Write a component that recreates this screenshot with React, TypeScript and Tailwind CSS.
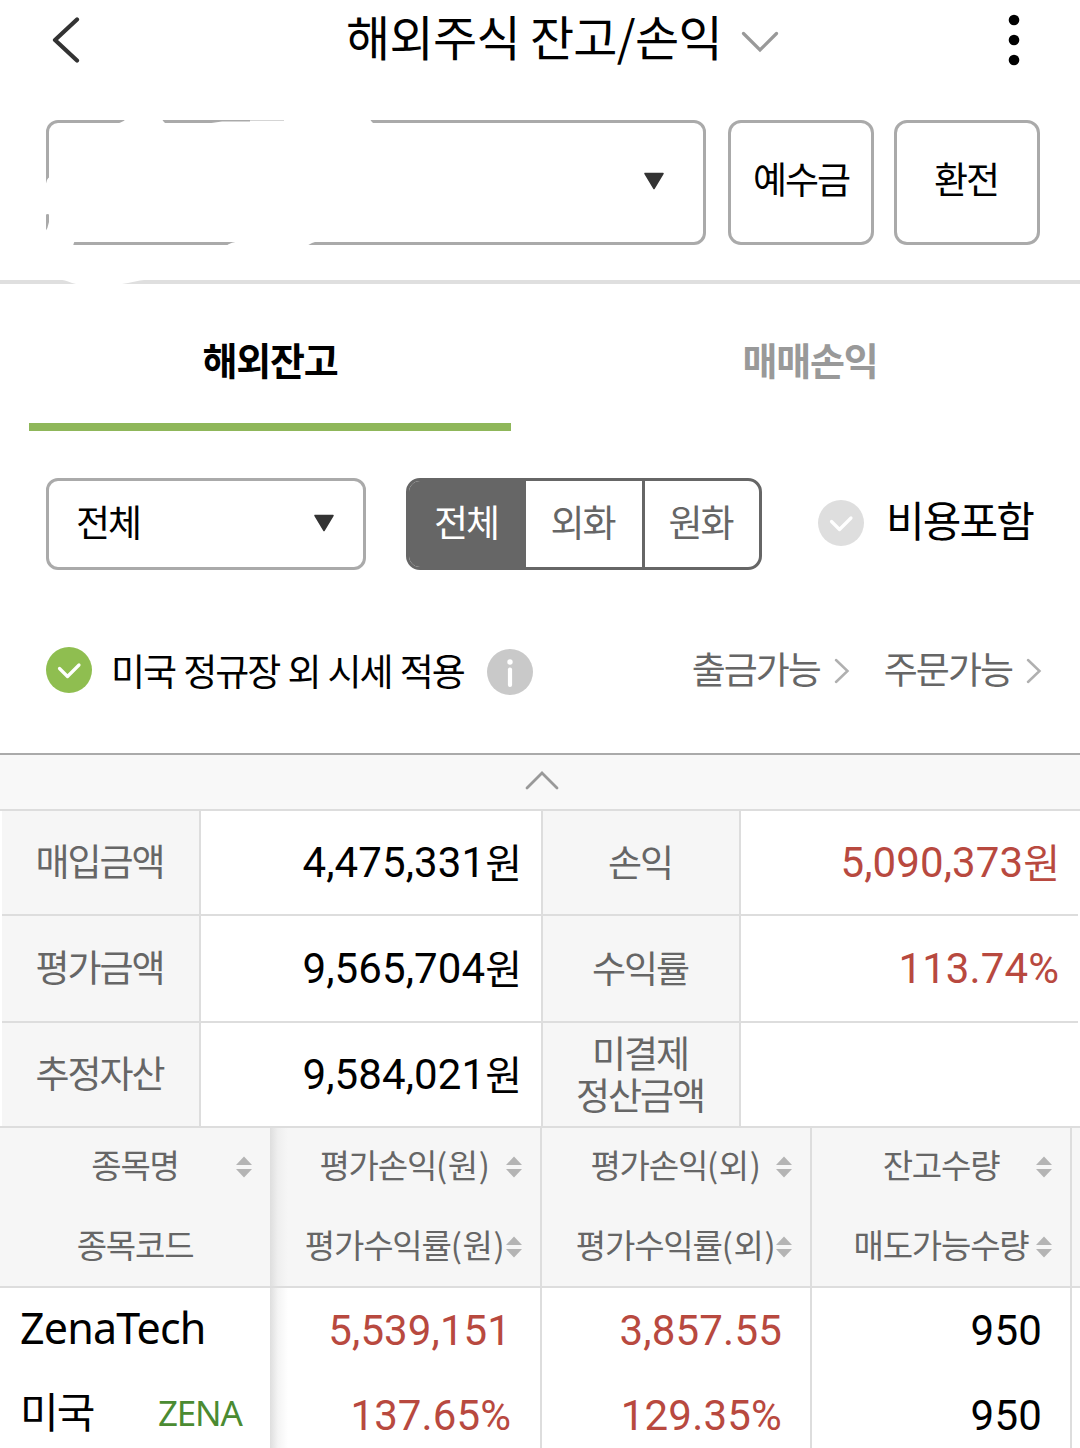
import { useState } from 'react';

const summaryRows = [
  { label: '매입금액', value: '4,475,331', unit: '원', label2: '손익', value2: '5,090,373', unit2: '원' },
  { label: '평가금액', value: '9,565,704', unit: '원', label2: '수익률', value2: '113.74%', unit2: '' },
  { label: '추정자산', value: '9,584,021', unit: '원', label2: '미결제\n정산금액', value2: '', unit2: '' },
];

const holdingColumns = [
  { top: '평가손익', bottom: '평가수익률', unit: '(원)' },
  { top: '평가손익', bottom: '평가수익률', unit: '(외)' },
  { top: '잔고수량', bottom: '매도가능수량', unit: '' },
];

const currencies = ['전체', '외화', '원화'];

function DropTriangle() {
  return (
    <svg className="-mt-[3px] h-[18px] w-[22px] shrink-0" viewBox="0 0 22 18">
      <path d="M2 1.5h18L11 16.5z" fill="#333" stroke="#333" strokeWidth="1.5" strokeLinejoin="round" />
    </svg>
  );
}

function CheckCircle({ on }: { on: boolean }) {
  return (
    <svg className="h-[46px] w-[46px] shrink-0" viewBox="0 0 46 46">
      <circle cx="23" cy="23" r="23" fill={on ? '#8fbe50' : '#dedede'} />
      <path d="M13.5 21.5l8 8L33 18" fill="none" stroke="#fff" strokeWidth="3.2" strokeLinecap="round" strokeLinejoin="round" />
    </svg>
  );
}

function RightArrow() {
  return (
    <svg className="h-[26px] w-4 shrink-0" viewBox="0 0 16 26">
      <path d="M2 2l11.5 11L2 24" fill="none" stroke="#b0b0b0" strokeWidth="2.5" strokeLinecap="round" />
    </svg>
  );
}

function SortIcon() {
  return (
    <svg className="h-[22px] w-4" viewBox="0 0 16 22">
      <path d="M8 0.5l8 8.5H0zM0 13h16l-8 8.5z" fill="#b4b4b4" />
    </svg>
  );
}

function HeadCell({ text, unit = '', sortable = true }: { text: string; unit?: string; sortable?: boolean }) {
  return (
    <div className="grid items-center">
      <span className="col-start-1 row-start-1 -mt-[3px] justify-self-center text-[33px] leading-[36px] tracking-[-1.2px]">
        {text}
        {unit && <span className="tracking-[0.6px]">{unit}</span>}
      </span>
      {sortable && (
        <span className="col-start-1 row-start-1 justify-self-end pr-[18px] pt-[3px]">
          <SortIcon />
        </span>
      )}
    </div>
  );
}

export default function App() {
  const [currency, setCurrency] = useState('전체');
  const [withCost, setWithCost] = useState(false);
  const [extended, setExtended] = useState(true);

  return (
    <div className="flex h-[1448px] w-[1080px] flex-col overflow-hidden bg-white font-['Noto_Sans_CJK_KR',sans-serif] text-black">
      <header className="flex h-20 shrink-0 items-center">
        <button className="w-[346px] pl-[52px]">
          <svg className="h-[46px] w-7" viewBox="0 0 28 46">
            <path d="M25 2.5L3 23l22 20.5" fill="none" stroke="#333" strokeWidth="4.2" strokeLinecap="round" strokeLinejoin="round" />
          </svg>
        </button>
        <button className="flex items-center">
          <span className="-mt-[11px] w-[395px] text-left text-[48px] leading-[72px] tracking-[-0.7px] whitespace-nowrap">해외주식 잔고/손익</span>
          <svg className="mt-1 h-6 w-10" viewBox="0 0 40 24">
            <path d="M2.5 3.5L19 20 35.5 3.5" fill="none" stroke="#999" strokeWidth="3.2" strokeLinecap="round" />
          </svg>
        </button>
        <button className="ml-auto mr-[60px]">
          <svg className="h-[52px] w-3" viewBox="0 0 12 52">
            <circle cx="6" cy="6" r="5.3" />
            <circle cx="6" cy="26" r="5.3" />
            <circle cx="6" cy="46" r="5.3" />
          </svg>
        </button>
      </header>

      <section className="relative flex h-[204px] shrink-0 items-start border-b-4 border-[#dfdfdf] pl-[46px] pt-10 text-[37px] tracking-[-2px]">
        <button className="flex h-[125px] w-[660px] items-center justify-end rounded-xl border-3 border-[#aaa] pr-[38px]">
          <DropTriangle />
        </button>
        <button className="ml-[22px] h-[125px] w-[146px] rounded-[13px] border-3 border-[#aaa] pb-[7px]">예수금</button>
        <button className="ml-5 h-[125px] w-[146px] rounded-[13px] border-3 border-[#aaa] pb-[7px] pr-[2px]">환전</button>
        {/* account number scrubbed out by hand */}
        <svg className="absolute left-0 top-0 h-[206px] w-[400px]" viewBox="0 80 400 206" fill="#fff">
          <path d="M112 125Q122 123 126 119H162Q164 124 170 125Z" />
          <path d="M190 126L222 121.5 250 121.5 250 120.5 284 120.5 284 119H370Q372 124 378 125V127H190Z" />
          <path d="M45 187L47 180Q49 176 51 178V216Q47 212 45 216Z" />
          <path d="M45 232Q48 228 49 222L50 214 80 236Q74 240 73 246H45Z" />
          <path d="M226 246Q230 242 242 241H320Q311 242 306 247Z" />
          <path d="M56 279Q66 280 72 283L84 286H110L128 283Q140 280 152 279Z" />
        </svg>
      </section>

      <nav className="flex h-[147px] shrink-0 px-[29px] text-[38px] font-bold tracking-[-1.2px]">
        <button className="h-full w-[482px] border-b-8 border-[#8fb75a] pt-[10px] text-black">해외잔고</button>
        <button className="ml-[58px] h-full w-[482px] border-b-8 border-transparent pt-[10px] text-[#999]">매매손익</button>
      </nav>

      <section className="mt-[47px] flex h-[92px] shrink-0 items-center pl-[46px] text-[37px] tracking-[-2px]">
        <button className="flex h-full w-80 items-center justify-between rounded-xl border-3 border-[#aaa] pl-[27px] pr-[28px]">
          <span className="-mt-[4px]">전체</span>
          <DropTriangle />
        </button>
        <div className="ml-10 grid h-full w-[356px] grid-cols-[117px_116px_117px] overflow-hidden rounded-[14px] border-3 border-[#666]">
          {currencies.map((name, i) => (
            <button
              key={name}
              onClick={() => setCurrency(name)}
              className={`h-full pb-[4px] pr-[3px] ${i === 2 ? 'border-l-3 border-[#666]' : ''} ${currency === name ? 'bg-[#666] text-white' : 'text-[#666]'}`}
            >
              {name}
            </button>
          ))}
        </div>
        <button onClick={() => setWithCost(!withCost)} className="-mt-[2px] ml-14 flex items-center">
          <CheckCircle on={withCost} />
          <span className="-mt-[10px] ml-[22px] text-[42px] tracking-[-1.9px]">비용포함</span>
        </button>
      </section>

      <section className="flex h-[183px] shrink-0 items-center pl-[46px] pr-[38px] pt-5 text-[37px] tracking-[-2px]">
        <button onClick={() => setExtended(!extended)} className="-mt-[4px] flex items-center">
          <CheckCircle on={extended} />
          <span className="mt-[2px] ml-[19px] w-[376px] text-left [word-spacing:1.8px] whitespace-nowrap">미국 정규장 외 시세 적용</span>
        </button>
        <svg className="h-[46px] w-[46px] shrink-0" viewBox="0 0 46 46">
          <circle cx="23" cy="23" r="23" fill="#c9c9c9" />
          <circle cx="23" cy="13" r="2.7" fill="#fff" />
          <path d="M23 20.5v15.5" stroke="#fff" strokeWidth="4.2" strokeLinecap="round" />
        </svg>
        <div className="-mt-[2px] ml-auto flex items-center text-[#666]">
          <span className="-mt-[4px]">출금가능</span>
          <span className="ml-[14px]"><RightArrow /></span>
          <span className="-mt-[4px] ml-[34px]">주문가능</span>
          <span className="ml-[14px]"><RightArrow /></span>
        </div>
      </section>

      <button className="flex h-[58px] shrink-0 items-center justify-center border-y-2 border-b-[#ddd] border-t-[#aaa] bg-[#f8f8f8] pl-1">
        <svg className="-mt-[5px] h-5 w-9" viewBox="0 0 36 20">
          <path d="M3 18L18 3l15 15" fill="none" stroke="#999" strokeWidth="2.8" strokeLinecap="round" />
        </svg>
      </button>

      <div className="grid h-[317px] shrink-0 grid-rows-[105px_107px_103px] border-b-2 border-[#ddd] px-[2px]">
        {summaryRows.map((row, i) => (
          <div
            key={row.label}
            className={`grid grid-cols-[199px_342px_198px_337px] text-[37px] ${i < 2 ? 'border-b-2 border-[#ddd]' : ''}`}
          >
            <div className="flex items-center justify-center border-r-2 border-[#ddd] bg-[#f6f6f6] pb-[4px] pr-[2px] tracking-[-2px] text-[#666]">{row.label}</div>
            <div className="flex items-center justify-end border-r-2 border-[#ddd] pr-[20px] font-['Roboto'] text-[42px] tracking-[0.1px]">
              {row.value}
              <span className="-mt-[3px] font-['Noto_Sans_CJK_KR'] text-[40px] tracking-[-1px]">{row.unit}</span>
            </div>
            <div className="flex items-center justify-center border-r-2 border-[#ddd] bg-[#f6f6f6] pb-[4px] pr-[2px] text-center leading-[42px] tracking-[-2px] whitespace-pre-line text-[#666]">
              {row.label2}
            </div>
            <div className="flex items-center justify-end pr-[19px] font-['Roboto'] text-[42px] tracking-[0.1px] text-[#b8493f]">
              {row.value2}
              <span className="-mt-[3px] font-['Noto_Sans_CJK_KR'] text-[40px] tracking-[-1px]">{row.unit2}</span>
            </div>
          </div>
        ))}
      </div>

      <div className="grid h-[320px] shrink-0 grid-cols-[270px_272px_270px_260px_8px] grid-rows-[160px_160px]">
        <div className="grid grid-rows-[74px_86px] border-b-2 border-[#ddd] bg-[#f6f6f6] text-[#666]">
          <HeadCell text="종목명" />
          <HeadCell text="종목코드" sortable={false} />
        </div>
        {holdingColumns.map((col, i) => (
          <div
            key={col.top + col.unit}
            className={`grid grid-rows-[74px_86px] border-b-2 border-r-2 border-[#ddd] text-[#666] ${i === 0 ? 'bg-[linear-gradient(to_right,#dedede,#efefef_8px,#f6f6f6_18px)]' : 'bg-[#f6f6f6]'}`}
          >
            <HeadCell text={col.top} unit={col.unit} />
            <HeadCell text={col.bottom} unit={col.unit} />
          </div>
        ))}
        <div className="border-b-2 border-[#ddd] bg-[#f6f6f6]" />

        <div className="flex flex-col pl-[20px]">
          <span className="h-[83px] font-['Noto_Sans'] text-[43px] leading-[80px] tracking-[-0.8px]">ZenaTech</span>
          <div className="flex h-[77px] items-center">
            <span className="w-[138px] text-[42px] leading-[77px] tracking-[-2px]">미국</span>
            <span className="pt-[8px] font-['Noto_Sans'] text-[35px] tracking-[-1.2px] text-[#4b8b32]">ZENA</span>
          </div>
        </div>
        <div className="flex flex-col items-end border-r-2 border-[#ddd] bg-[linear-gradient(to_right,#dedede,#f4f4f4_8px,#fff_18px)] pr-[29px] font-['Roboto'] text-[42px] tracking-[0.1px] text-[#b8493f]">
          <span className="leading-[85px]">5,539,151</span>
          <span className="leading-[85px]">137.65%</span>
        </div>
        <div className="flex flex-col items-end border-r-2 border-[#ddd] pr-[28px] font-['Roboto'] text-[42px] tracking-[0.2px] text-[#b8493f]">
          <span className="leading-[85px]">3,857.55</span>
          <span className="leading-[85px]">129.35%</span>
        </div>
        <div className="flex flex-col items-end border-r-2 border-[#ddd] pr-[28px] font-['Roboto'] text-[42px] tracking-[0.2px]">
          <span className="leading-[85px]">950</span>
          <span className="leading-[85px]">950</span>
        </div>
      </div>
    </div>
  );
}
